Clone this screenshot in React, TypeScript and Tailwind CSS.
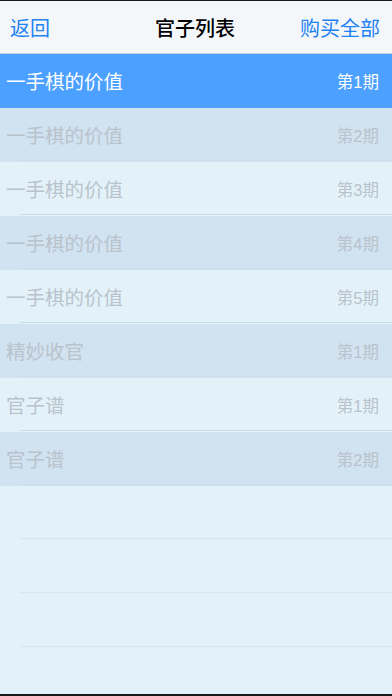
const ROWS = [
  { title: '一手棋的价值', issue: '第1期' },
  { title: '一手棋的价值', issue: '第2期' },
  { title: '一手棋的价值', issue: '第3期' },
  { title: '一手棋的价值', issue: '第4期' },
  { title: '一手棋的价值', issue: '第5期' },
  { title: '精妙收官', issue: '第1期' },
  { title: '官子谱', issue: '第1期' },
  { title: '官子谱', issue: '第2期' },
];

const font = { fontFamily: '"Liberation Sans", "Noto Sans CJK SC", sans-serif' };

export default function App() {
  return (
    <div className="w-[392px] h-[696px] flex flex-col overflow-hidden bg-[#e3f2f9]" style={font}>
      <div className="h-px bg-[#1a1a1a]" />
      <div className="h-[53px] flex items-center px-[10px] pt-[3px] bg-[#f4f7f9] border-b border-[#c9d0d6]">
        <span className="flex-1 text-[20px] text-[#1f82f3]">返回</span>
        <span className="text-[20px] text-black font-medium">官子列表</span>
        <span className="flex-1 text-right text-[20px] text-[#1f82f3] pr-[2px]">购买全部</span>
      </div>
      <div className="flex flex-col flex-1">
        {ROWS.map((r, i) => {
          const sel = i === 0;
          const bg = sel ? 'bg-[#4ca0ff]' : i % 2 === 1 ? 'bg-[#d1e2f0]' : 'bg-[#e3f2f9]';
          return (
            <div key={i} className={`relative h-[54px] flex items-center justify-between pl-[6px] pr-[13px] pt-[3px] ${bg}`}>
              <span className={`text-[19.5px] ${sel ? 'text-white' : 'text-[#b9c3cc]'}`}>{r.title}</span>
              <span className={`text-[16.5px] ${sel ? 'text-white' : 'text-[#b9c3cc]'}`}>{r.issue}</span>
              {!sel && <div className="absolute left-[20px] right-0 bottom-[1px] h-px bg-[#cddcea]" />}
            </div>
          );
        })}
        {[0, 1, 2].map(i => (
          <div key={i} className="relative h-[54px]">
            <div className="absolute left-[20px] right-0 bottom-[1px] h-px bg-[#d6e6f0]" />
          </div>
        ))}
        <div className="flex-1" />
      </div>
      <div className="h-[2px] bg-[#1a1a1a]" />
    </div>
  );
}
